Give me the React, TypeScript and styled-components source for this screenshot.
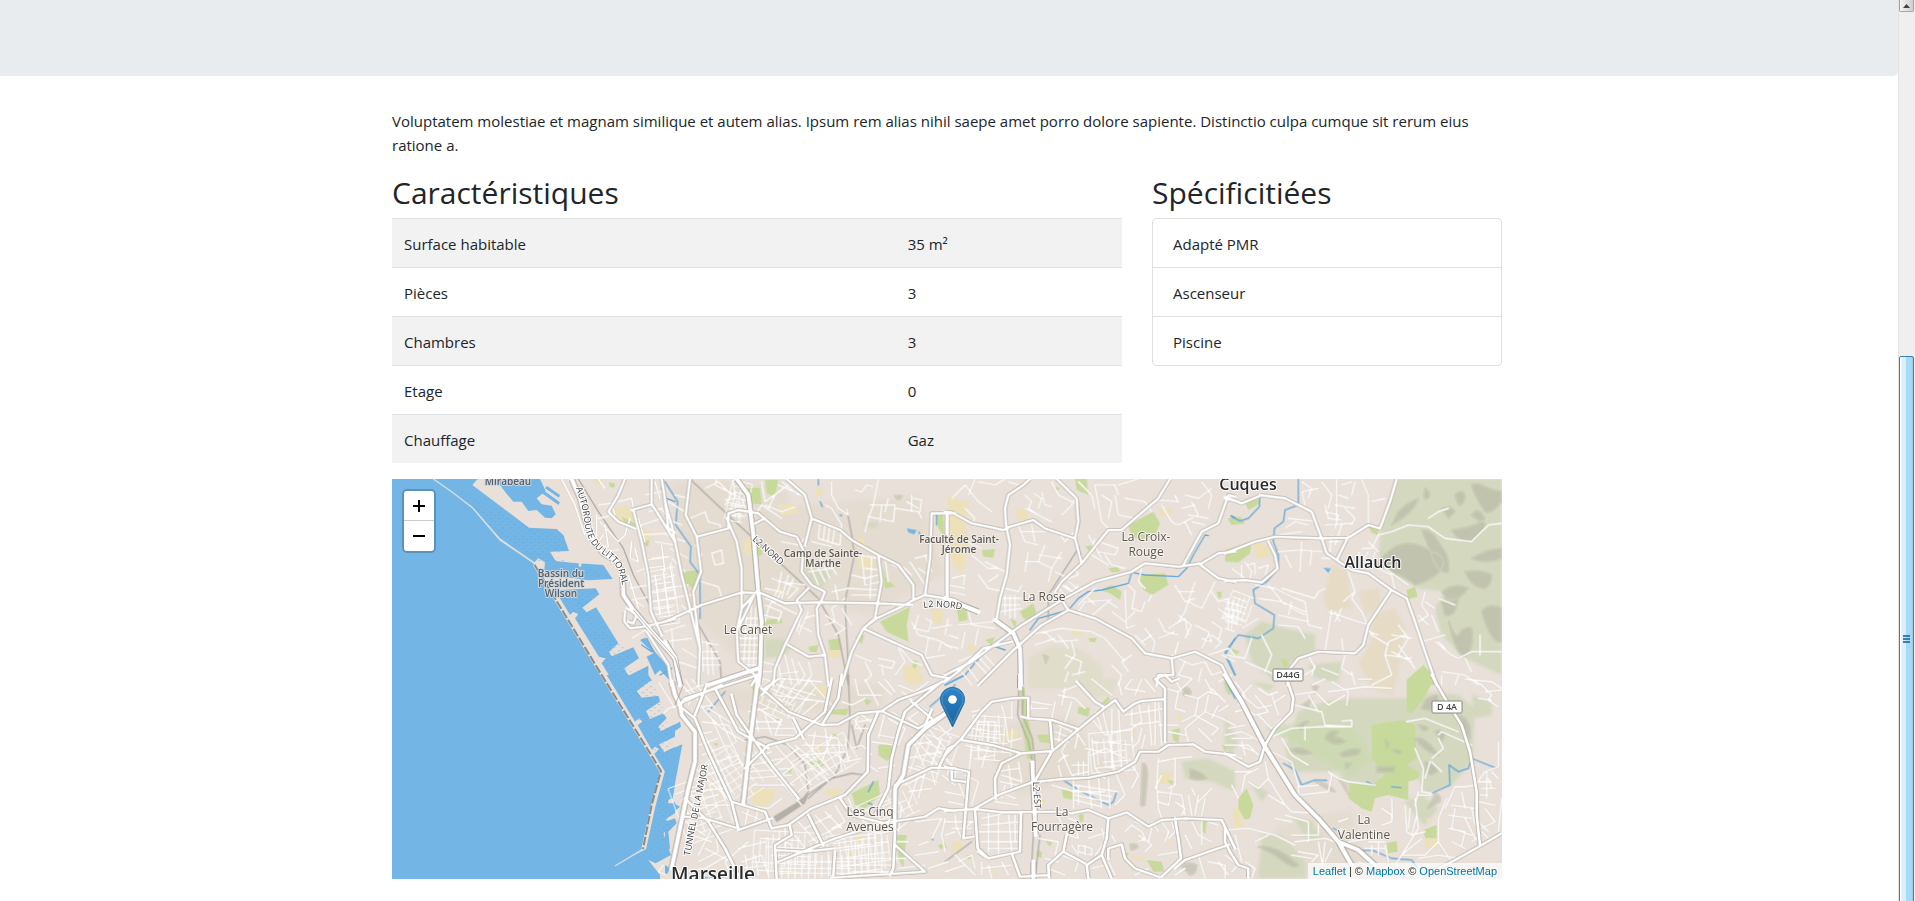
import React from 'react';
import styled, { createGlobalStyle } from 'styled-components';

const GlobalStyle = createGlobalStyle`
  *, *::before, *::after { box-sizing: border-box; }
  body {
    margin: 0;
    background: #fff;
    color: #212529;
    font-family: "Segoe UI", "Open Sans", "Noto Sans", sans-serif;
    font-size: 15px;
    line-height: 24px;
  }
`;

const Shell = styled.div`
  display: grid;
  grid-template-columns: minmax(0, 1fr) 17px;
  height: 100vh;
  overflow: hidden;
`;

const Page = styled.div`
  min-width: 0;
`;

const Banner = styled.header`
  height: 76px;
  margin-bottom: 33px;
  background: #e9ecef;
  border-radius: 0 0 5px 0;
`;

const Main = styled.main`
  padding: 0 19px 0 15px;
`;

const Container = styled.div`
  max-width: 1110px;
  margin: 0 auto;
`;

const Intro = styled.p`
  margin: 0 0 17px;
`;

const Columns = styled.div`
  display: grid;
  grid-template-columns: minmax(0, 730fr) minmax(0, 350fr);
  column-gap: 30px;
  align-items: start;
`;

const Title = styled.h2`
  margin: 0 0 6px;
  font-size: 30px;
  line-height: 38px;
  font-weight: 400;
`;

const FeatureTable = styled.table`
  width: 100%;
  margin-bottom: 16px;
  border-collapse: separate;
  border-spacing: 0;
  table-layout: fixed;
`;

const FeatureRow = styled.tr`
  &:nth-child(odd) { background: #f2f2f2; }
`;

const Name = styled.th`
  width: 69%;
  padding: 13px 12px 11px;
  border-top: 1px solid #dee2e6;
  font-weight: 400;
  text-align: left;
`;

const Value = styled.td`
  padding: 13px 12px 11px;
  border-top: 1px solid #dee2e6;
`;

const OptionList = styled.ul`
  margin: 0;
  padding: 0;
  list-style: none;
  border: 1px solid #dfdfdf;
  border-radius: 4px;
`;

const Option = styled.li`
  padding: 13px 20px 11px;
  & + & { border-top: 1px solid #dfdfdf; }
`;

const MapFrame = styled.section`
  position: relative;
  height: 400px;
  overflow: hidden;
  background: #e8e0d9;
`;

const MapDrawing = styled.svg`
  display: block;
  width: 100%;
  height: 100%;
`;

const ZoomControl = styled.div`
  position: absolute;
  top: 10px;
  left: 10px;
  display: flex;
  flex-direction: column;
  border: 2px solid rgba(0, 0, 0, 0.2);
  border-radius: 5px;
  background-clip: padding-box;
`;

const ZoomButton = styled.button`
  display: grid;
  place-items: center;
  width: 30px;
  height: 30px;
  padding: 0;
  border: 0;
  background: #fff;
  color: #000;
  &:first-child { border-bottom: 1px solid #ccc; border-radius: 3px 3px 0 0; }
  &:last-child { border-radius: 0 0 3px 3px; }
`;

const Attribution = styled.div`
  position: absolute;
  right: 0;
  bottom: 0;
  padding: 0 5px;
  background: rgba(255, 255, 255, 0.7);
  color: #333;
  font-family: "Liberation Sans", Arial, sans-serif;
  font-size: 11px;
  line-height: 16px;
`;

const Credit = styled.a`
  color: #0078a8;
  text-decoration: none;
`;

const ScrollBar = styled.div`
  display: flex;
  flex-direction: column;
  overflow: hidden;
  border-left: 1px solid #e3e3e3;
  background: #efefef;
`;

const ScrollUp = styled.button`
  display: grid;
  place-items: center;
  flex: 0 0 12px;
  margin-right: 1px;
  padding: 0;
  border: 1px solid #a4a4a4;
  border-top: 0;
  border-radius: 0 0 2px 2px;
  background: linear-gradient(90deg, #f4f4f4, #cfcfcf);
`;

const ScrollGap = styled.div`
  flex: 345 0 0;
`;

const ScrollThumb = styled.div`
  flex: 564 0 0;
  display: grid;
  place-items: center;
  margin: 0 1px -20px 0;
  border: 1px solid #3c7fb1;
  border-radius: 2px;
  background: linear-gradient(90deg, #fff 0 1px, #d9f0fc 2px 45%, #a9daf5 50% 85%, #8ecbee);
`;

/* ---- Map data: each sheet is 870 x 630 units, placed every 840 x 600 ---- */

type Sheet = {
  x: number; y: number;
  park?: string; scrub?: string; hill?: string; sand?: string;
  water?: string; land?: string; stream?: string; rail?: string;
  minor?: string; major?: string; highway?: string;
};

const sheets: Sheet[] = [
  {
    x: 0, y: 0,
    sand: 'M685 100L725 92L750 115L745 145L720 148L695 125ZM775 160L800 170L802 200L780 205ZM625 12L655 12L650 28L630 30Z',
    park: 'M710 125L750 145L755 162L725 155ZM775 200L792 195L790 214L780 214ZM672 22L690 25L688 38L675 36Z',
    water: 'M0 0H145L262 98L345 195L405 235L448 268L520 390L680 640H0ZM145 12H278L262 30L432 158L515 162L535 180L552 228L495 230L512 258L560 263L655 270L683 312L610 316L560 308L520 306L478 285L480 262L460 250L448 262L405 232L345 190L262 95ZM335 12H465L482 48L455 70L470 88L500 92L512 118L500 130L480 128L455 105L430 108L410 80L385 80L360 50L345 30ZM525 345L632 340L643 358L592 398L605 412L633 397L700 505L672 530L680 544L745 517L762 550L718 580L730 602L790 572L790 600L760 605L775 630H690L650 565L662 550L642 545L570 430L580 418L565 410L555 420L522 365ZM465 50L470 42L525 82L520 90ZM480 40L486 33L525 60L522 68ZM765 495L780 488L810 530L845 570L860 600L850 612L825 585L810 600L785 545L805 535Z',
    land: 'M765 540L790 526L796 536L770 550ZM580 262L590 262L588 275L582 275Z',
    stream: 'M835 12L830 40L845 70L870 80M770 510L800 530M785 490L805 528M825 600L860 580',
    rail: 'M580 12L640 110L715 220L745 300L800 400',
    minor: 'M530 12L570 90L600 180M640 90L680 85L690 120L640 130M635 120V210L670 215L660 150M645 140L700 200L720 180L735 130M610 180L640 230L700 225M655 180L630 215M740 200L735 250L760 260L750 220M755 290L780 280M730 300L760 400M735 340L790 330M740 375L795 365M800 380L870 370M800 350L870 335M795 320L870 300M795 290L870 275M800 250L850 245M810 300L825 420M835 290L850 410M855 270L870 360M770 150L830 130M760 180L850 175M790 110L830 100L860 150M700 80L740 70L745 100M810 20L825 70M800 400L870 390M805 420L870 408M740 490L790 460M775 395L755 380M640 12L660 40M780 60L830 50M760 130L780 200M810 200L870 210M830 210L840 290',
    major: 'M720 12L700 60L670 110L700 140L750 160M740 105L800 88L815 110L870 200M800 12V88M745 105L770 200L790 300L798 410L830 480M830 12L838 60L850 160L870 172M720 410L718 440L735 460L775 455L800 450L870 432M785 470L850 570L860 630M725 400L755 420L745 445L730 440',
    highway: 'M560 12L585 70L600 130L625 200L655 235L700 262L712 300L715 360L745 405L800 470L870 548',
  },
  {
    x: 840, y: 0,
    sand: 'M335 90L390 85L400 115L350 122ZM240 190L265 180L260 240L235 230ZM580 250L630 240L625 290L580 280ZM455 35L475 38L470 65L452 60ZM850 60H870V180H850ZM715 570L765 575L760 630L720 615ZM800 400L835 405L830 450L805 445ZM490 520L530 530L525 550L492 548ZM330 335L350 335L350 360L335 358ZM570 190L595 185L605 215L575 215Z',
    park: 'M245 40L285 38L290 88L255 85ZM300 15L340 15L330 65L305 55ZM55 290L100 285L105 320L85 340L55 325ZM645 440L735 395L725 450L730 500L685 480L665 470ZM490 495L525 490L530 525L495 525ZM300 435L350 430L352 445L300 450ZM810 110L835 112L838 185L820 160ZM655 280L665 310L690 335L660 340ZM275 215L295 210L290 240L275 245ZM745 555L762 560L750 582L742 575ZM430 515L460 510L455 532L435 530ZM570 485L598 480L590 508Z',
    scrub: 'M300 495L350 490L378 520L355 545L300 550ZM595 142L637 142L635 160L598 158ZM420 280L500 290L470 340L430 320Z',
    hill: 'M690 62L712 62L705 72L695 72Z',
    water: 'M725 160L755 165L748 178L730 172ZM0 570L15 600L10 610L0 590Z',
    stream: 'M0 20L38 80L32 150L78 215L75 260L105 300V430M465 80L472 95M460 12V30M525 120L530 122M762 170L768 190M815 115V150',
    rail: 'M75 12L200 130L460 370L520 480L550 630M560 180L568 240L540 380L548 540L550 630M95 440L165 560L170 630M545 100L560 180',
    minor: 'M120 40L160 20L200 60L180 90M150 30L230 70L240 100M205 20L210 70L180 75M195 90L230 95M200 110L240 125M215 75L205 125M225 80L220 130M75 130L120 110L130 140L165 150L168 170M90 210L110 240L100 260M140 235L170 225L175 265L150 270ZM110 320L160 335L170 365M150 30L155 12M290 20L300 80L370 30M300 90L350 110L390 95M330 60L310 100M400 60L350 20M340 30L430 70M350 130L290 90L270 120M480 90L500 100L530 150L525 210L490 200M465 140L460 190L520 210M480 145L475 195M495 150L488 200M510 155L502 205M500 20V60L520 100L550 120L545 100M570 45L590 50L605 30L625 35M640 12L625 90L610 130L600 170M615 90H690L685 140L610 125M650 90L645 140M670 70L660 110M690 100L760 110L770 130M725 80L760 100M745 70L770 75L765 110M740 60V110M430 180L400 210L350 200M440 200L500 215M430 260L460 330M445 250L480 320M465 245L495 310M480 240L515 300M430 290L500 280M300 340L350 350L330 380L300 370M320 310L400 340L370 370M350 290L340 340L310 400M370 300L350 370M385 310L365 360M340 320L420 330M560 300L600 310L640 300M580 240L640 250M590 240L600 330L650 320M600 280L650 285M550 340L640 345M560 360H640M620 245L615 370M660 250L670 320M680 270L720 280L740 300M750 250L790 240M760 280L790 300M780 240L800 290M735 260L780 330M540 370L500 400L510 440L480 450M510 330L520 380M500 350L550 340M480 420L540 460L510 480M530 400L560 450M420 430L450 420L455 440M400 450L440 470M410 420L395 470M430 410L400 480M235 430L280 430M230 450L285 450M225 470L285 470M222 490L285 490M220 510L285 510M222 530L280 530M225 550L280 550M230 570L275 570M245 410L235 590M260 380L250 590M272 400L265 580M110 490L115 590M125 500L130 600M140 520L145 600M110 500L160 510M110 530H160M110 550H165M110 570H165M300 390L350 410L340 440M310 400L300 440M320 380L400 420M290 420L340 430M290 560L330 570M290 590H330M340 560L350 630M360 540L380 630M380 550L400 620M320 600L400 590M400 560L420 600L400 630M430 560L440 600L420 630M640 550L690 560L680 580L640 570M600 560L620 600L600 620M650 570L655 600M570 540L620 560M700 520L720 560L690 600M740 440L760 480L800 490L830 500L820 530M745 460L790 470L800 440L780 430M760 420L750 460M800 460L860 450M790 490L780 550L840 540M830 500L860 520M850 430L840 480M690 500L740 560L770 570M0 470L60 450M0 500L80 490M20 460L30 600M50 520L100 550M40 560L100 580M10 80L60 110M0 130L50 150M5 180L60 200M15 220L70 250M20 250L60 290M30 60L70 70M0 340L70 330M10 370L80 360M50 390L80 420',
    major: 'M75 12L62 120L95 185L190 160L190 115L220 105L280 115L345 170L395 185L415 225L410 290L440 330L480 350L470 375L455 400L460 480L480 540L490 630M185 130L215 200L230 280V400L215 470L220 560L270 600M95 185L108 290L85 350L90 400L105 520L100 630M0 80L20 150L50 300L80 420L105 520M0 440L110 390L230 352L290 355L360 385L460 382L640 385L740 390M430 340L395 375L410 405L360 510L330 580L325 630M370 510L430 545L480 540M365 12L420 60L440 130L525 165L560 195L640 240L650 320L635 400L630 430L595 460L560 530L530 630M640 240L700 270L745 330V375L710 395L635 430L595 460L660 490L770 540L800 600L850 610M735 380L780 360L870 375M870 115H800L795 250L780 360M845 115V370M440 130L420 210M270 145L300 130M230 400L275 350M215 470L270 355',
    highway: 'M215 12L250 60L265 180L280 350L290 440L285 590L280 630M130 630L280 580M0 500L30 550L45 630',
  },
  {
    x: 1680, y: 0,
    sand: 'M10 70L70 80L60 150L70 210L50 300L20 260L10 180ZM215 100L250 105L245 140L215 130ZM640 100L680 100L675 125L645 120ZM380 460L420 465L415 480L380 480ZM70 505L92 515L88 535L68 525ZM310 305L330 310L325 325ZM430 355L450 360L440 378Z',
    park: 'M390 12H425L430 60L395 45ZM550 150L625 110L645 145L630 180L600 195L560 185ZM580 300L660 295L670 330L620 360L595 345ZM465 345L500 330L530 350L525 375L495 355ZM225 410L265 385L275 420L255 440L235 430ZM490 280L520 275L525 290L500 292ZM850 130L870 125V148L855 145ZM120 495L150 485L140 510ZM430 490L455 488L450 502L435 500ZM35 405L65 400L68 435L42 440ZM325 35L345 38L335 50ZM420 215L440 210L435 230ZM110 225L150 222L145 248L115 245ZM815 350L830 350L828 370L820 368ZM195 430L215 440L210 460Z',
    hill: 'M295 540L310 545L302 565Z',
    stream: 'M0 630L60 600L110 540M150 515L180 525M255 465L280 430L300 425L370 405L400 370L430 350L470 345L550 325L560 292L600 300L700 305L725 280L745 240L780 180L790 182M870 490L840 540L870 600M858 122L870 128',
    rail: 'M400 220L320 345L310 360V430M0 370L30 380',
    minor: 'M20 70L60 30L100 80L140 110M70 60L90 12M60 100L90 130L80 150M240 60L260 80L250 100L280 120M265 55L290 70L280 100M290 50L300 90L320 95M240 100L320 140M220 150L240 200L280 210M230 170H300M260 150L270 200M350 120L380 90L390 70M320 20L340 60L400 90M450 30H510L520 60M450 30L470 140L490 160M470 60L500 80L490 130M510 60L520 120L570 130M400 20L440 60L450 100M520 30L580 12M540 70L600 80M600 80L620 110M640 75L700 80L690 60M650 90L680 140L700 150M700 150L760 120L740 80M710 100L750 90M720 60L760 70L800 40M770 20L800 60L790 100M730 120L790 130M740 140L780 150M720 140L740 180M450 190L440 240L490 270M460 200L520 220L510 240L460 230M480 240L500 270L540 280M430 180L470 250M390 170L360 200L340 170M330 290L370 310L400 300L390 280M350 330L380 350L400 330M340 340L370 370M360 330L395 360M370 320L410 350M300 210L280 260L320 280L310 320M280 240L350 250M350 230L320 280M250 230L240 290M240 260L280 260M180 340L220 350L230 330M170 370H230M170 390H225M165 410L230 400M180 360V420M195 360V430M210 360V430M100 300L130 340L180 350M60 200L110 220M80 240L130 280L160 280M120 260L180 290M10 330L60 340M20 310L60 300L55 330M130 320L160 300M10 350L60 360M70 410L80 450L150 460M40 450L150 440M60 470L50 520M100 460L90 510M10 480L40 490M0 510L40 520M400 410L420 380L500 375M430 430L490 380L520 400M450 390L430 370M400 390L450 340M540 345L545 460L570 450M560 400L590 410L600 380M500 410L540 440M550 330L570 350L560 400M590 280L580 320L600 340M570 410L550 430M620 360L610 380M690 330L720 380L750 370M750 320L720 410L700 440M810 320L770 400L730 380M700 350L750 350M670 460L720 430L730 480M700 420L740 450L720 490M640 430L660 470L700 480M640 490L690 470M750 450L790 470L800 500L770 490M800 440L830 460L820 500M820 400L870 440M830 430L870 420M840 460L870 470M800 480L830 500L810 520M770 520L790 480M800 350L820 380L850 370M700 500L690 540M680 540L740 570L780 560L800 600L830 590M720 560L700 600L740 610M770 580L760 620M590 500L620 480M600 460L630 500L620 540M570 480L600 510M560 540L530 560L550 590M500 570L530 600L520 630M380 500L390 540L360 580M360 540L410 560L400 600M370 590L360 620M380 600L420 590M250 480L350 460L440 470L480 490L540 560M300 470L330 500L400 495M340 480L370 520M270 510L330 490M90 560L130 600M105 550L140 590M120 540L155 580M70 580L100 620M50 590L80 630M40 560L110 530M180 12L150 30L100 20M220 30L190 20M790 540L850 520L870 540M830 540L870 560M820 620L860 600',
    major: 'M255 12L235 30L190 60L180 100L183 150L195 210L185 300L165 370L155 430M0 110L20 112L80 145L130 155L175 165L195 155L265 135L300 160L390 190L410 265L350 320L330 350M335 12L395 70L400 140L390 190M675 12L640 70L570 130L530 165L490 165L410 265M0 620L40 590L115 520L200 500M870 230L820 235L770 265L700 275L600 265L560 290L450 320L350 375L230 450L160 500L80 560L0 600M100 630L200 530L290 450L370 405L450 430L560 490L600 535L680 550L750 530L830 570L860 630M350 375L370 405M715 270L770 170L820 145L850 60L870 65M760 265L820 310L870 320M680 550L685 600L640 600L635 630M8 110L8 370L40 380',
    highway: 'M0 370L100 410M150 435L205 475L225 520L228 630',
  },
  {
    x: 2520, y: 0,
    sand: 'M80 195L130 215L135 245L95 250Z',
    park: 'M55 75L95 62L105 85L70 105ZM10 130L45 125L60 145L20 150ZM0 225L80 200L75 235L40 262L0 260ZM545 345L570 335L578 365L550 372ZM545 615L595 570L625 600L630 630H545ZM430 155L470 152L455 180L440 172ZM165 555L180 550L195 570L180 580ZM20 520L45 530L25 545Z',
    scrub: 'M520 12H830V600L720 550L650 480L630 400L660 350L580 340L500 300L460 240L470 150ZM60 480L110 440L180 460L270 480V530L200 560L150 620L80 560ZM250 570L350 560L340 620L270 610Z',
    hill: 'M740 30Q760 20 790 40L830 50V80Q800 120 780 110Q750 70 740 30ZM680 165Q730 160 770 140Q800 150 740 200Q700 205 680 165ZM520 110Q550 80 580 70Q570 110 500 150ZM600 40Q620 50 610 70Q590 80 600 40ZM510 215Q560 190 620 230Q660 240 655 270Q640 310 570 330Q540 300 450 275Q470 240 510 215ZM590 165Q620 160 640 200Q680 250 670 290Q640 300 620 240ZM650 100Q680 90 690 110L670 130ZM650 350Q690 320 730 340Q710 370 670 380ZM672 440Q690 490 700 480Q720 450 740 460Q750 520 720 545Q690 540 672 440ZM740 250Q790 220 830 220V250Q780 270 740 250ZM720 290Q770 280 800 300Q800 330 780 340Q740 340 720 290ZM770 410Q790 380 830 400V500Q800 510 770 410ZM650 380Q680 365 700 375Q690 430 660 420ZM740 120Q760 90 780 130Q770 150 740 120ZM690 60Q710 40 720 60Q720 90 700 90Z',
    water: 'M295 278L318 280L310 294Z',
    stream: 'M220 12V90L180 105L175 140L148 160L145 200L160 240V280L125 320L85 345L90 385L148 420L145 460L100 490L40 480L0 530L30 600M105 60L103 95L70 130L45 138L20 125',
    minor: 'M230 20L260 40L250 70M240 90L230 50L280 40M290 20L320 60L310 100M335 12V140M340 60L370 70M350 30L380 20M300 110L340 120L330 160M300 90L310 130L350 135M300 150L380 145M360 100L390 130L380 150M410 12L430 60V150M390 20L380 60M440 80L480 70M330 90L390 100M160 180L230 170M180 160L210 140L250 150M190 130L280 140M160 230L230 225L290 230M180 240L200 280M230 200L225 290M260 230L255 270M290 250L330 250M310 200L345 200M320 180L315 230M350 150L330 210M60 260L80 290L75 310M50 270V320M65 270L90 265V300M100 280L130 270L120 300M20 280L60 310M90 330L150 340L210 370L240 380M130 330L180 390M170 340L270 370L280 350L300 340M100 370L170 380L240 410M200 380L190 420M240 380L250 450L290 460M240 420L200 400M250 440L160 420M160 450L220 455L240 490M310 410L430 450M320 405L300 530M330 410L345 440M350 400L330 440M350 490L355 530M360 260L390 350L380 370L410 410L440 480L490 510M390 350L355 380M410 220L440 220L460 180L500 170L550 150L610 155L660 190L740 200L790 150L830 145M430 200L460 230M400 230L410 260L430 230M440 270L500 300L510 350M450 230L440 270M480 280L550 330M600 350L590 390L610 420L580 440M600 380L630 400M640 370L690 390M620 420L640 470M580 420L610 450M540 480L490 500L480 540M520 450L550 490L520 540M500 480L560 490M480 540L560 550M500 530L560 560M520 510L570 580M480 540L500 600L440 630M590 500L660 480M630 500L680 540L700 550L740 530L830 530M765 480V540M660 520L640 500M650 590L720 600L760 630M650 600V630M700 600L690 630M720 550L740 590M610 130L640 110L670 100M380 590L390 630M360 540L350 580L380 600M270 570L260 600M290 580L340 600M0 380L40 390M0 400L50 410M0 420L60 440M0 440L50 450M10 370V460M25 375L20 460M40 385L35 450M50 460L100 430M80 490L60 550L0 540M110 480L140 540L120 590M60 560L130 590L150 600M250 540L270 580L240 600M430 470L460 480',
    major: 'M0 235L90 200L150 185L290 190L370 188L430 150L465 160L495 80L515 12M105 60L180 70L260 110L290 190L305 235L335 255L370 185M335 255L380 285L430 295L500 345L545 370L570 440L600 530L635 630M500 345L430 450L415 510L390 535L280 530L220 550L188 590V630M0 318L60 315L110 322L158 280L150 240L130 200M0 65L50 85L110 60M0 70L40 80',
  },
  {
    x: 0, y: 600,
    water: 'M0 0H655L750 150L800 240L832 290L805 390L778 520L690 573L825 612H0ZM690 0H790L800 15L755 48L770 68L820 62L825 80L783 108L795 132L835 115L845 130L820 155L828 168L870 148V185L822 208L838 232L870 215V330L860 385L870 380V415L842 432L850 442L870 435V450L835 475L850 520L858 540L812 565L790 555L825 600V612H600L778 525L808 390L836 290L805 240L822 222L810 215L800 225L758 150L772 140L762 130L750 140L665 0Z',
    land: 'M850 375L862 370L865 385H850Z',
    minor: 'M820 20L870 100M835 570L820 590L845 600M835 115L850 100L870 95',
  },
  {
    x: 840, y: 600,
    sand: 'M715 0H775L770 25L740 30L715 15ZM265 340L330 345L320 380L290 405L260 380ZM440 30L490 35L485 65L445 50ZM480 345L530 340L520 370L490 365ZM570 475L600 480L595 505L572 500ZM455 210L475 215L465 235ZM125 315L150 315L145 345ZM540 530L565 530L560 555ZM360 580L385 585L375 610ZM235 215L250 220L245 245Z',
    park: 'M640 210L680 205L685 240L665 258L640 240ZM560 355L640 315L645 360L600 400L570 390ZM430 260L475 255L480 270L455 280ZM695 480L725 480L715 580L700 550ZM500 105L550 100L545 120L500 118ZM595 70L620 78L605 92ZM330 130L348 130L345 145ZM360 285L380 280L378 298ZM250 20L290 50L285 65L260 40ZM820 510L840 505L845 518L825 522ZM500 175L520 180L510 190ZM145 205L160 205L155 215Z',
    water: 'M0 165L45 140L48 155L0 190ZM0 230L52 208L20 380L45 395L0 432ZM0 440L30 430L35 445L10 470L15 520L0 540ZM0 570L15 580L5 600H0Z',
    stream: 'M130 110L180 50M795 95L870 30M610 350L625 320M610 385L622 388M120 608L200 612M800 490L804 495',
    rail: 'M550 0L555 130L548 220L510 300L430 370M240 195L300 185L370 210L420 270L430 350L400 390M400 380L500 310L560 295L600 300M600 150L575 220M560 150L575 220',
    minor: 'M40 20L80 60L70 90M60 12L120 110M80 12L150 100M60 50L140 20M90 100L140 90M120 110L170 160L240 200M110 140L190 150L215 200M130 100L240 170M100 150L150 240M140 130L200 260M160 120L240 290M90 180L140 170M100 210L160 190M110 240L190 210M120 270L220 240M130 300L230 260M135 330L180 310M140 220L200 350M130 250L180 370M170 310L210 380M80 270L200 380M70 350L180 340M60 390L210 390M100 370L160 360M90 400L70 530M110 420L230 470M160 390L130 410M60 440L120 480M80 480L140 500M150 440L100 540M100 560L160 530L150 470M120 520L200 560M40 590L120 580L190 540M250 500L180 560L200 610M230 560L290 540L310 600M240 540L250 610M270 540L280 600M230 580L310 570M220 520L300 500M310 490V610M340 490L380 510M360 460V520L400 530M380 470L420 520M400 440L470 520M430 430L480 500M450 420L510 490M480 410L530 460M420 460L500 420M430 500L530 450M440 520L540 490M510 390L540 440L500 460M350 540V610M370 530V610M390 530V610M410 530V610M430 530V610M450 535V610M470 540V605M490 540V605M330 560H560M340 580H560M340 595H560M530 540V605M550 510V605M570 500V600M590 490V600M610 480V600M630 470V600M650 480V600M510 520L670 500M510 550H680M510 570H690M560 590H690M520 490L670 470M690 500H730M690 550H750M700 580L780 570M740 430L690 470M710 390L700 470M750 440L830 430L800 490M840 430L830 480L840 530M750 540L820 530M760 510L790 500M790 580L850 560M690 270L640 280M730 210L800 200M720 250L830 230M740 180L820 270M760 160L840 250M780 150L850 230M710 270L780 290M750 210L780 280M840 100L860 160L820 190M820 150L860 190M830 190L800 270M720 330L780 300M730 350L800 340M760 300L730 390M780 290L760 370M800 290L810 330M830 300L870 330M580 110L570 160L610 160M590 120L630 150M560 120L590 170M580 140L640 130M660 110L640 190M670 130L720 160L700 210M680 110L750 160M640 180L700 190M620 200L690 210M620 240L590 210L560 220M610 270L640 290M590 250L540 260L500 230M520 200L530 290M500 180L470 260M540 190L550 260M380 130L400 190M350 130L330 180L390 180M300 120L320 180M270 110L280 170M250 110L310 100M250 140L350 140M270 160L390 160M240 180L300 220L250 250M280 100L350 150M330 60L360 10M350 80L400 20M370 90L430 20M390 110L450 40M400 130L460 80M340 30L450 60M330 60L480 80M350 10L470 20M430 12L500 90M260 250L320 230M260 270L350 250M250 290L370 280M250 310L380 300M260 330L390 330M270 230L410 390M290 220L400 370M330 210L440 330M360 200L490 320M390 210L490 300M420 200L510 300M330 270L400 220M350 300L430 240M370 330L450 270M400 350L480 280M400 240L540 230M410 210L540 210M430 180L520 190M450 170L440 230M480 160L490 230M230 410L300 440M240 390L310 400L350 370M250 400L240 450M280 400L270 440M600 12L620 50L640 90M570 12L580 60L650 60M600 70L560 90L530 80M640 20L680 60M660 12L690 50M710 50L740 70M700 30L750 50L790 20M730 70L790 110M760 110L730 130L760 150M550 370L570 420L600 440L650 480M640 400L680 380',
    major: 'M45 90L60 70L280 0M280 0L260 30M55 80L170 30M40 90L90 130L130 230L200 380M125 30L90 120M150 40L220 170L310 220M290 40L370 110L470 150L520 148L580 115L650 108L700 75L770 50L850 12M325 20L290 60M500 12L480 110L390 190L310 210L240 280M530 0L520 70L470 150M385 130L415 190M340 12L300 40M640 110L610 180L608 290L540 360L440 400L370 450L320 460L300 410L200 380L220 460L120 430L60 425M830 20L720 110L700 170L680 250L670 340L630 420M650 108L760 160L850 110M200 60L215 120L320 270L400 370M220 465L320 430M375 455L380 480L330 510L335 610M430 420L475 510M525 370L560 420L680 450L690 470L685 580L675 600M680 440L780 425L820 400L870 408M340 560L510 490L670 440M510 530L505 600M330 525L420 530L510 520M690 510L780 590L500 608M690 330L800 278L870 280M820 280L850 220L870 210M740 80L800 130M60 370L130 440L180 520L220 600M800 105L780 150',
    highway: 'M20 20L30 60L45 90L50 120L90 170V260L70 340L45 460L20 580M280 0L255 200L235 385M850 110L780 160L730 210L715 300L690 340L688 460',
  },
  {
    x: 1680, y: 600,
    sand: 'M170 170L220 165L215 200L175 185ZM640 295L680 290L675 330L645 325ZM690 120L710 115L708 145ZM20 505L50 495L50 525L25 530ZM555 160L575 165L565 190ZM655 480L675 485L670 510ZM540 545L600 545L595 560ZM145 580L160 585L155 605ZM280 375L300 375L300 395Z',
    park: 'M400 95L435 98L430 125L398 115ZM275 180L310 178L315 205L285 202ZM350 345L382 340L385 375L355 368ZM220 15H235L250 130L265 220V255L245 250L235 170ZM605 555L650 560L658 590L625 590ZM835 25L855 15L870 45L850 50ZM470 85L490 62L495 75L480 90ZM680 165L705 160L700 205L685 195ZM530 530L550 535L545 550ZM400 420L415 415L415 440L405 440ZM770 430L785 430L782 475L770 470ZM665 315L685 318L680 330ZM830 210L848 215L840 230ZM300 498L322 502L315 515ZM275 525L290 530L290 548L275 545ZM65 540L82 540L80 552H65Z',
    scrub: 'M710 260L790 250L870 290V350L800 320L720 310Z',
    hill: 'M592 265Q606 260 608 300L600 390Q590 395 587 390ZM735 282Q770 290 785 310Q760 320 735 310ZM712 40Q730 30 738 50Q740 70 715 60ZM555 508Q575 505 580 515Q570 525 558 525ZM705 570Q740 560 755 570Q755 600 735 600Z',
    stream: 'M0 30L60 0M350 312L400 345L430 360L490 390L505 380L515 350M845 0L860 40L870 60',
    rail: 'M222 40L218 120L250 200L262 260M235 40L232 120L262 190L270 260M265 480L258 610M0 560L80 500M285 480L270 610',
    minor: 'M80 110L130 100M90 140H150L145 220M100 130L90 200M120 120L110 210M130 140V220M80 160L160 170M70 180L160 190M160 120L165 200M180 130L190 200L230 190M200 80V130M170 90L180 130M60 210L140 230M80 220L70 300M120 240L110 280M100 210V250L150 240M150 290L220 280M170 300L230 320M165 320L220 330M190 270L200 340M220 260L230 320M180 330L170 370M160 350L210 370M150 380L220 390M60 300L100 320L80 390M40 320L60 370M0 350L50 360M10 380L60 390M0 250L30 280M20 290H60M20 320H60M30 290V320M30 420L35 460L50 490M60 420V480M80 440L50 470M80 460H20M0 440L90 440M0 480L30 470M110 430L200 410M110 450L230 440M100 470H230M110 500H230M130 520H220M130 410V530M160 410V540M190 410L200 530M210 420V500M40 560L80 540L90 580M30 540L90 600M0 590L60 570M110 560V600M130 570L140 610M170 560L190 600M110 580L200 570M260 80L320 90M250 100H310M260 90L250 120M340 60L390 70L420 100M360 40L350 90M380 80L360 140M330 80L320 130M400 30L350 50M340 150L400 180L420 210M330 170L380 190M320 190L370 200M350 140L340 200M380 170L350 230M400 170L390 220M440 130L480 180L560 160L560 200M470 100L490 180L510 290M500 100V280M520 90L530 280M450 110L470 160M540 120L600 110L660 100M560 90V150M580 80L590 140L560 160M590 160L580 200L560 220M600 180L590 220M610 90L620 210M630 80V210M640 80L650 210M560 150L640 140M490 200L560 210M480 220L540 250M440 190L450 280L480 310M420 220L470 230M440 200L460 200M440 240L480 220M450 280L530 270M350 230L380 300L430 290M350 250L370 240M380 270H430M400 260V300M415 260V310M430 230V310M340 270L350 310M360 240L340 260M320 330L390 350L480 350M390 330L520 350M390 345L500 365M390 360L490 380M390 375L470 395M400 330V390M385 300V400M430 310L440 400M460 310L470 400M490 310L495 400M510 290L540 360L510 390M560 270L580 300L560 340M640 250L635 330L640 400L650 430M640 260L690 250L740 245M690 250V330L670 340M650 300L630 340M640 350L710 360L720 420M690 380L720 400L710 420M730 360L740 420M750 360L740 340M760 360L750 420M780 370L770 420M800 340L760 380M680 340L670 390L640 380M570 60L590 12M520 20L530 60M540 40L600 50M600 12L630 50M560 12L540 40M440 12L500 60M660 40L700 50L690 100L720 110M700 50L740 12M720 60L760 70L790 50L820 60M760 70L750 120L710 140M790 60L780 110L830 130M750 120L820 160L800 180M780 110L720 160L730 200M820 90L800 130M830 130L870 150M760 160L800 200M780 12L800 50M690 12L710 50M800 40L840 80M850 90L820 110M640 150L700 150M670 170L720 180M330 400L350 450L370 480M370 480L400 490L390 450M370 430L400 440M400 510L440 520V540L400 530ZM420 510V540M380 510L400 540M450 540L480 500L470 460M430 490L490 470M500 480L510 500M540 470L560 450L590 470L600 490L580 500M570 440L620 460L610 500M580 480L620 510L600 530M620 440L640 470M650 440L670 470L660 500M680 440L690 470L670 490M740 440L760 480L800 500M770 430V510M790 440L820 450M720 480L740 520M700 530L640 540M760 540L780 610M790 560L840 570V610M820 560L850 600M720 580L690 600M490 560L510 600M280 490L340 500L330 540M300 550L340 560M310 580L360 600M350 540L400 560L390 590M570 600L610 580M440 580L480 570',
    major: 'M0 240L50 190L110 110L140 80L200 70L250 68V130L230 125M250 130L320 135L395 160M315 135L322 220M395 20L450 80L480 98L440 130L380 180L320 230L280 300L265 325M480 98L510 75L535 110L570 85L590 78L660 72M50 195L140 210L230 235L320 228M230 235L170 265L150 310L152 370M90 400L160 360L260 322L350 312L430 308L520 290L570 260L585 230L640 230L670 210L745 208L780 230L870 240M660 200V40L630 12L660 0L680 20L700 12M0 275L72 290L55 490L85 485M20 290V315L60 320M0 408L90 402L170 412L340 410L380 415L430 405L490 430L545 412L610 455L650 435L720 430L830 435L870 520M90 402L98 520L130 550L225 530L228 410M690 430L700 490L708 550L650 605M490 430L485 490L470 540L425 570L430 610M365 480L355 530L310 570L312 608M355 530L420 565M490 550V520L530 508L540 550L570 580L640 605M200 535L225 605L310 600M850 510L790 530L720 555L690 580M120 545L100 530M470 540L500 610M450 80L395 20',
    highway: 'M225 0V40M262 262L268 390L272 480M265 560V612',
  },
  {
    x: 2520, y: 600,
    sand: 'M25 400L45 395L55 455L25 460ZM600 485H640L635 515L600 520ZM85 140L100 145L95 160ZM600 430L620 430L615 445Z',
    scrub: 'M220 110L300 80L380 70L540 70L600 50L700 60L750 100L740 260L680 330L600 360L580 310L370 340L340 290L200 290L180 220ZM0 120L40 200L20 240L0 220ZM0 12L20 60L0 50ZM110 480L170 480L240 560L240 608H100ZM80 330L130 350L110 380ZM740 60L800 80L800 120L750 130ZM540 380L590 360L640 400L600 450L570 420ZM80 20L150 30L130 50ZM200 420L260 440L290 490L250 500Z',
    park: 'M440 150L530 135L570 150L575 250L545 270L580 290V310L550 320V375L490 360L450 370L440 410L410 400L370 370L375 320L440 330L480 300L440 250ZM545 30L570 0H635L590 80L560 115L545 110ZM40 370L65 340L85 390L75 430L60 435L40 400ZM485 505L515 498L518 530L490 535ZM595 465L635 450L635 490L600 488ZM0 20L20 50L10 60Z',
    hill: 'M300 190Q310 160 340 170L330 185Q355 190 360 200Q330 220 300 190ZM345 235Q380 215 405 225Q410 245 350 245ZM190 225Q230 210 260 235Q225 245 190 225ZM570 190Q600 180 640 240Q600 235 570 190ZM600 260Q630 270 640 285Q620 310 600 290ZM455 275H510L505 292H455ZM480 195Q500 205 485 220ZM500 225Q525 220 530 230Q525 245 500 225ZM360 265L380 265L365 280ZM270 320Q310 320 330 350L310 345ZM580 150Q600 150 610 160Q600 180 580 150ZM630 170Q650 160 660 180L650 200ZM340 310Q370 330 370 360ZM600 75Q640 50 640 70Q630 120 590 100ZM700 120Q740 130 735 190Q715 170 700 120ZM215 155Q240 135 250 140L230 165ZM100 515Q160 510 220 570Q210 590 150 540ZM630 355Q650 360 645 380L610 400ZM230 90L260 70L250 100ZM260 30L280 35L270 55Z',
    stream: 'M175 265L210 285L230 330L270 315L305 316M620 355L675 330L672 270L700 290L730 280L740 250L810 278M400 528L440 525L500 550L560 555L575 575M425 320L445 330M500 335L528 338M0 12L30 70M325 460L335 465',
    minor: 'M30 20L60 60L40 90M80 30L50 60L100 100L140 90M90 60L130 110M60 100L90 120L130 110M100 40L130 60L160 50M30 110L70 100M100 120L140 160L170 130M140 60L160 120M150 80L180 60M200 60L270 50L310 90L360 60M210 90L290 110L300 150L380 155M260 30L300 12M250 60L280 110M310 50L420 35L500 40M320 20L370 50L365 90M400 12L440 12M130 190L200 160L290 155L380 155V135L350 138M240 155V195M170 190L200 240L250 270M140 230L200 260L220 330V360L310 350L320 300L310 290M220 335L280 330M310 290L340 310L370 320L450 330M0 180L50 170L110 200M0 210L70 210L100 240M20 190L80 190M50 200L60 240M10 240L50 250M40 210L90 230M10 160L60 150M120 260L130 310L180 390L200 410L280 415M100 280L60 300L50 350M80 290L30 290M20 330L40 370M130 310L100 340L70 320M130 360L180 390M180 420L250 440V500M200 480L280 480L280 420M150 430L200 440M210 500L300 490L330 500M220 530L280 540L260 560M280 500L290 560M300 500L290 590M320 520L300 560M340 440L370 430M350 460L340 490M470 400L500 420V440L470 450M500 370L502 430M540 390L545 470L560 480M555 400L550 460M570 370L580 460L530 540M575 420L560 480L600 470M580 350L570 390M580 360L620 360M570 220L595 280L590 350L620 355M620 260L650 290M615 260L600 310M620 250L655 220L640 190M545 140L600 130L650 150L700 170M640 180L650 170L740 210M665 370L640 430L640 500L680 560M690 335L660 400M690 335H720L750 330M680 390L750 400M670 420L740 430M710 350L720 400M690 400L680 460L740 480M670 460L720 470L710 510M720 430L750 490M740 400L750 450M640 500L600 540L530 540L510 570M530 540L590 490M430 500H480M440 510V540M460 500V540M420 520L480 520M480 510L490 560M400 560L440 580M350 530L370 500L440 490M820 200V275L780 290L750 330M785 290V370M760 320H800M770 340H810M765 360L790 360M790 310L800 340M800 290L820 310M760 380L810 390M830 370L820 470M780 400L810 440L770 460M760 440L790 470M770 470L800 500M740 12L770 30L800 60L790 75L820 95M720 12L800 20L830 40M760 70L800 75M780 50L830 45M770 480L740 500M680 500L720 520M0 465L70 460L150 480L210 510M90 500L130 480M60 560L90 580L80 608M0 540L40 570L20 590M30 480L50 560M200 540L260 550M520 570L480 600M580 550L640 540L700 550',
    major: 'M620 0L660 70L710 150L735 230L745 290L755 350V420L765 510M600 600L690 555L770 510L830 475M188 20L205 70L200 110L150 160L120 210L105 260L70 275L0 235M0 500L15 530L40 570L70 580V608M0 465V500',
    highway: 'M0 0L50 80L120 215L210 360L280 430L340 500L380 570M340 500L400 525L450 570',
  },
];

/* Dense town blocks: centre, size, rotation and number of streets each way */
const blocks: number[][] = [
  [950, 1000, 150, 180, -20, 5, 8], [1200, 1130, 190, 120, 3, 10, 5],
  [1430, 1130, 200, 120, -8, 11, 5], [1320, 860, 180, 100, -30, 8, 4],
  [1050, 900, 120, 160, -35, 5, 7], [1180, 680, 140, 90, 25, 6, 5],
  [1650, 840, 110, 150, 20, 4, 6], [830, 350, 80, 200, -8, 3, 8],
  [1060, 80, 60, 120, 12, 4, 7], [2180, 830, 130, 120, -5, 6, 4],
  [1820, 790, 120, 130, 4, 5, 5], [2560, 400, 70, 90, 20, 5, 5],
  [1510, 1000, 170, 90, -25, 7, 4],
];

const blockPath = ([cx, cy, w, h, deg, cols, rows]: number[]) => {
  const a = (deg * Math.PI) / 180;
  const point = (u: number, v: number) =>
    `${Math.round(cx + u * Math.cos(a) - v * Math.sin(a))} ${Math.round(cy + u * Math.sin(a) + v * Math.cos(a))}`;
  let d = '';
  for (let i = 0; i <= cols; i++) {
    const u = (i / cols - 0.5) * w;
    const trim = ((i * 7) % 4) * h * 0.08;
    d += `M${point(u, -h / 2 + trim)}L${point(u, h / 2 - (((i * 5) % 3) * h) / 10)}`;
  }
  for (let j = 0; j <= rows; j++) {
    const v = (j / rows - 0.5) * h;
    const trim = ((j * 5) % 4) * w * 0.09;
    d += `M${point(-w / 2 + trim, v)}L${point(w / 2 - (((j * 3) % 4) * w) / 12, v)}`;
  }
  return d;
};

type LayerKey = Exclude<keyof Sheet, 'x' | 'y'>;

const Layer = ({ of, fill = 'none', stroke = 'none', width = 0, opacity, cap = 'round' }: {
  of: LayerKey; fill?: string; stroke?: string; width?: number; opacity?: number;
  cap?: 'round' | 'butt';
}) => (
  <g fill={fill} stroke={stroke} strokeWidth={width} opacity={opacity}
    strokeLinejoin="round" strokeLinecap={cap}>
    {sheets.map((s) => s[of] && (
      <path key={`${s.x}-${s.y}`} d={s[of]} transform={`translate(${s.x} ${s.y})`} />
    ))}
  </g>
);

type Place = { lines: string[]; x: number; y: number; step?: number; kind: 'town' | 'city' | 'suburb' | 'poi' | 'dock' };

const places: Place[] = [
  { lines: ['Mirabeau'], x: 116, y: 6, kind: 'dock' },
  { lines: ['Bassin du', 'Président', 'Wilson'], x: 169, y: 98, step: 10, kind: 'dock' },
  { lines: ['Camp de Sainte-', 'Marthe'], x: 431, y: 78, step: 10, kind: 'poi' },
  { lines: ['Faculté de Saint-', 'Jérome'], x: 567, y: 64, step: 10, kind: 'poi' },
  { lines: ['Le Canet'], x: 356, y: 155, kind: 'suburb' },
  { lines: ['La Croix-', 'Rouge'], x: 754, y: 62, step: 15, kind: 'suburb' },
  { lines: ['La Rose'], x: 652, y: 122, kind: 'suburb' },
  { lines: ['Les Cinq', 'Avenues'], x: 478, y: 337, step: 15, kind: 'suburb' },
  { lines: ['La', 'Fourragère'], x: 670, y: 337, step: 15, kind: 'suburb' },
  { lines: ['La', 'Valentine'], x: 972, y: 345, step: 15, kind: 'suburb' },
  { lines: ['Cuques'], x: 856, y: 11, kind: 'town' },
  { lines: ['Allauch'], x: 981, y: 89, kind: 'town' },
  { lines: ['Marseille'], x: 321, y: 402, kind: 'city' },
];

const looks = {
  dock: { size: 10, weight: 600, ink: '#55606b', halo: '#cdd6dc' },
  poi: { size: 10, weight: 600, ink: '#5a5652', halo: '#f1ece6' },
  suburb: { size: 12, weight: 400, ink: '#5c564f', halo: '#f7f3ef' },
  town: { size: 16, weight: 600, ink: '#2b2b2b', halo: '#ffffff' },
  city: { size: 19, weight: 600, ink: '#2b2b2b', halo: '#ffffff' },
};

const PlaceLabel = styled.text<{ $kind: Place['kind'] }>`
  font-family: "Open Sans", "Noto Sans", sans-serif;
  font-size: ${(p) => looks[p.$kind].size}px;
  font-weight: ${(p) => looks[p.$kind].weight};
  fill: ${(p) => looks[p.$kind].ink};
  stroke: ${(p) => looks[p.$kind].halo};
  stroke-width: 2px;
  stroke-linejoin: round;
  paint-order: stroke;
  text-anchor: middle;
`;

const RoadLabel = styled.text`
  font-family: "Open Sans", "Noto Sans", sans-serif;
  font-size: 9px;
  font-weight: 500;
  fill: #3c3c3c;
  stroke: #fff;
  stroke-width: 2px;
  paint-order: stroke;
`;

const ShieldLabel = styled.text`
  font-family: "Open Sans", "Noto Sans", sans-serif;
  font-size: 9px;
  font-weight: 600;
  fill: #444;
  text-anchor: middle;
`;

const roadNames = [
  { id: 'littoral', name: 'AUTOROUTE DU LITTORAL', d: 'M184 9L190 28L194 52Q198 66 209 74Q223 83 227 93L233 116' },
  { id: 'nord-a', name: 'L2 NORD', d: 'M360 61L398 95' },
  { id: 'nord-b', name: 'L2 NORD', d: 'M532 129Q548 126 576 132' },
  { id: 'major', name: 'TUNNEL DE LA MAJOR', d: 'M298 377L304 345L318 276' },
  { id: 'est', name: 'L2 EST', d: 'M641 303L644 345' },
];

const Shield = ({ x, y, label }: { x: number; y: number; label: string }) => (
  <g>
    <rect x={x - 15} y={y - 6} width="30" height="12" rx="1" fill="#fff" stroke="#8b8781" />
    <ShieldLabel x={x} y={y + 3}>{label}</ShieldLabel>
  </g>
);

const CityMap = () => (
  <MapDrawing viewBox="0 0 1110 400" preserveAspectRatio="xMidYMid slice" role="img" aria-label="Carte de Marseille">
    <defs>
      <linearGradient id="pin" x1="0" y1="0" x2="0" y2="1">
        <stop offset="0" stopColor="#2e85cb" />
        <stop offset="1" stopColor="#1c6297" />
      </linearGradient>
      <filter id="soft" x="-5%" y="-5%" width="110%" height="110%">
        <feGaussianBlur stdDeviation="5" />
      </filter>
      <pattern id="ripple" width="24" height="18" patternUnits="userSpaceOnUse">
        <path d="M2 5H10M14 14H20" stroke="#5aa2d6" strokeWidth="2" />
      </pattern>
      {roadNames.map((r) => <path key={r.id} id={r.id} d={r.d} />)}
    </defs>
    <rect width="1110" height="400" fill="#e8e0d9" />
    <g transform="translate(-7 -4) scale(0.333333)">
      <g filter="url(#soft)" fill="#e3dacd" opacity="0.6">
        <path d="M860 20L1200 20L1240 300L1220 500L1060 560L900 400ZM1150 100L1600 60L1680 300L1450 420L1180 340ZM950 640L1500 630L1480 720L1000 700ZM2680 1050L2900 1000L2950 1200L2600 1210ZM1750 760L2050 720L2200 900L1900 960Z" />
      </g>
      <g filter="url(#soft)" fill="#dedcc6" opacity="0.7">
        <path d="M1930 550L2000 510L2080 520L2150 570L2160 640H1930ZM2080 615L2200 612L2180 660L2120 670Z" />
      </g>
      <g filter="url(#soft)" fill="#e6dbc5">
        <path d="M2840 270L2890 290L2900 400L2830 410L2815 370ZM2920 350L2980 340L2990 400L2940 420ZM2960 420L3030 400L3060 460L3040 590L3020 660L2960 640L2920 560L2960 500Z" />
      </g>
      <g filter="url(#soft)">
        <Layer of="scrub" fill="#d3d8be" />
      </g>
      <path d="M2640 760Q2760 740 2900 760L2960 850L2900 900L2780 830Z" fill="#cbdab0" filter="url(#soft)" opacity="0.8" />
      <Layer of="sand" fill="#ece1b9" />
      <Layer of="park" fill="#c8da9b" />
      <Layer of="hill" fill="#b3b3a0" stroke="#c2c3ae" width={6} opacity={0.55} />
      <Layer of="water" fill="#73b6e6" />
      <path d="M200 30L440 160L540 180L550 225L500 240L680 305L560 300L440 250L345 180ZM530 350L640 345L600 400L690 500L740 530L720 580L790 590L830 680L860 820L850 900L860 1050L820 1160L790 1150L838 890L760 740L640 540Z" fill="url(#ripple)" opacity="0.55" />
      <Layer of="land" fill="#e8e0d9" />
      <path d="M145 12L200 50L262 98L345 195L450 266M690 1173L778 1120" fill="none" stroke="#d9dedf" strokeWidth="4" />
      <Layer of="stream" stroke="#67a9d8" width={4} />
      <Layer of="rail" stroke="#b2aca6" width={4} />
      <path d="M325 1025L390 985L432 955L420 985L335 1042Z" transform="translate(840 0)" fill="#b5afa9" />
      <Layer of="minor" stroke="#d6cdc5" width={6} opacity={0.6} />
      <path d={blocks.map(blockPath).join('')} fill="none" stroke="#fff" strokeWidth="3" opacity="0.85" />
      <Layer of="minor" stroke="#fff" width={4} />
      <Layer of="major" stroke="#b0aaa3" width={12} cap="butt" />
      <Layer of="highway" stroke="#a39d97" width={18} cap="butt" />
      <Layer of="major" stroke="#fff" width={8} />
      <Layer of="highway" stroke="#fff" width={13} />
      <path d="M450 268L655 602L832 890L805 990L776 1122" fill="none" stroke="#e8e0d9" strokeWidth="14" strokeLinejoin="round" />
      <path d="M449 270L650 600L828 888L800 990L774 1122" fill="none" stroke="#8b8b88" strokeWidth="6" strokeDasharray="26 6" />
      <path d="M745 405L800 470L870 548L895 630L870 690" fill="none" stroke="#98938e" strokeWidth="2" />
    </g>
    {roadNames.map((r) => (
      <RoadLabel key={r.id}><textPath href={`#${r.id}`}>{r.name}</textPath></RoadLabel>
    ))}
    {places.map((p) => (
      <PlaceLabel key={p.lines[0] + p.x} $kind={p.kind}>
        {p.lines.map((line, i) => (
          <tspan key={line} x={p.x} y={p.y + i * (p.step ?? 0)}>{line}</tspan>
        ))}
      </PlaceLabel>
    ))}
    <Shield x={896} y={196} label="D44G" />
    <Shield x={1055} y={228} label="D 4A" />
    <g transform="translate(548 208)">
      <path d="M12.5 0.5C5.8 0.5 0.5 5.8 0.5 12.4C0.5 15 1.3 17.4 2.6 19.6L12.5 40L22.4 19.6C23.7 17.4 24.5 15 24.5 12.4C24.5 5.8 19.2 0.5 12.5 0.5Z" fill="url(#pin)" stroke="#2b6e9f" />
      <path d="M12.5 2C6.7 2 2 6.7 2 12.4C2 15 2.8 17 4 19L12.5 36.5L21 19C22.2 17 23 15 23 12.4C23 6.7 18.3 2 12.5 2Z" fill="none" stroke="#5fa4dc" strokeOpacity="0.6" />
      <circle cx="12.5" cy="12.5" r="4.3" fill="#fff" />
    </g>
  </MapDrawing>
);

const features: [string, string][] = [
  ['Surface habitable', '35 m²'],
  ['Pièces', '3'],
  ['Chambres', '3'],
  ['Etage', '0'],
  ['Chauffage', 'Gaz'],
];

const options = ['Adapté PMR', 'Ascenseur', 'Piscine'];

export default function App() {
  return (
    <>
      <GlobalStyle />
      <Shell>
        <Page>
          <Banner />
          <Main>
            <Container>
              <Intro>
                Voluptatem molestiae et magnam similique et autem alias. Ipsum rem alias nihil saepe amet porro
                dolore sapiente. Distinctio culpa cumque sit rerum eius ratione a.
              </Intro>
              <Columns>
                <section>
                  <Title>Caractéristiques</Title>
                  <FeatureTable>
                    <tbody>
                      {features.map(([name, value]) => (
                        <FeatureRow key={name}>
                          <Name scope="row">{name}</Name>
                          <Value>{value}</Value>
                        </FeatureRow>
                      ))}
                    </tbody>
                  </FeatureTable>
                </section>
                <section>
                  <Title>Spécificitiées</Title>
                  <OptionList>
                    {options.map((option) => <Option key={option}>{option}</Option>)}
                  </OptionList>
                </section>
              </Columns>
              <MapFrame>
                <CityMap />
                <ZoomControl>
                  <ZoomButton type="button" aria-label="Zoom avant">
                    <svg width="14" height="14" viewBox="0 0 14 14"><path d="M1 7H13M7 1V13" stroke="#000" strokeWidth="2" /></svg>
                  </ZoomButton>
                  <ZoomButton type="button" aria-label="Zoom arrière">
                    <svg width="14" height="14" viewBox="0 0 14 14"><path d="M1 7H13" stroke="#000" strokeWidth="2" /></svg>
                  </ZoomButton>
                </ZoomControl>
                <Attribution>
                  <Credit href="#leaflet">Leaflet</Credit> | © <Credit href="#mapbox">Mapbox</Credit> ©{' '}
                  <Credit href="#osm">OpenStreetMap</Credit>
                </Attribution>
              </MapFrame>
            </Container>
          </Main>
        </Page>
        <ScrollBar>
          <ScrollUp type="button" aria-label="Défiler vers le haut">
            <svg width="7" height="4" viewBox="0 0 7 4"><path d="M0 4L3.5 0L7 4Z" fill="#444" /></svg>
          </ScrollUp>
          <ScrollGap />
          <ScrollThumb>
            <svg width="7" height="8" viewBox="0 0 7 8"><path d="M0 1H7M0 4H7M0 7H7" stroke="#3c7fa8" strokeWidth="2" /></svg>
          </ScrollThumb>
        </ScrollBar>
      </Shell>
    </>
  );
}
